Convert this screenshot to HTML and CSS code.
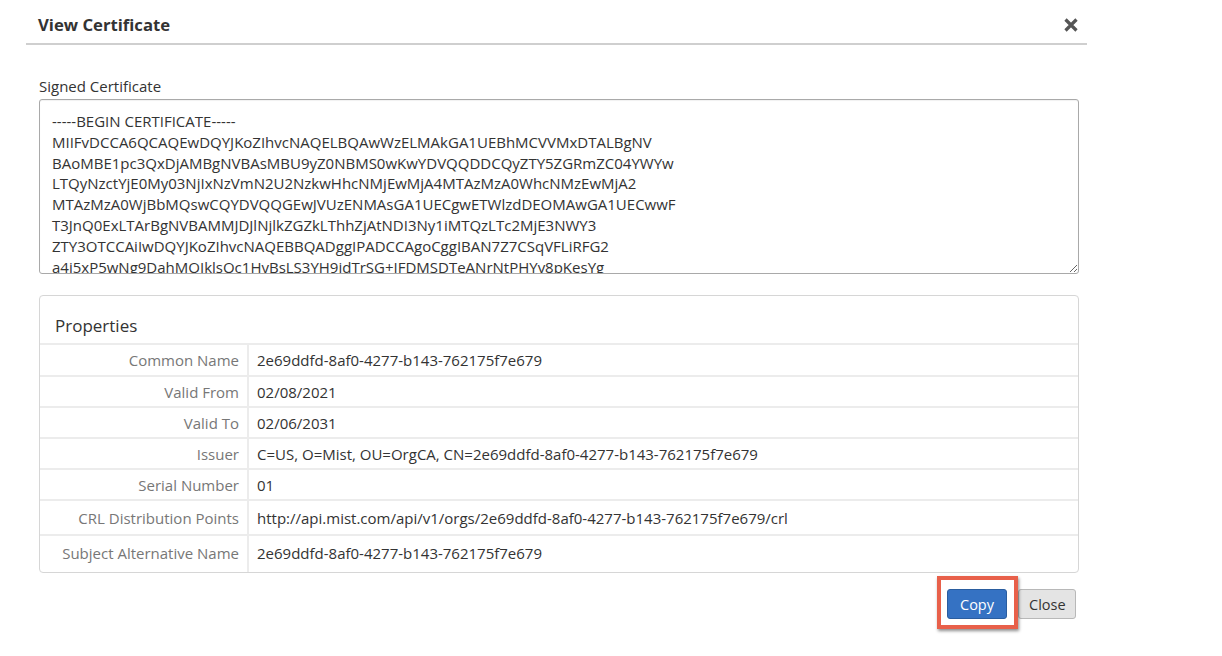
FILE: index.html
```html
<!DOCTYPE html>
<html>
<head>
<meta charset="utf-8">
<link rel="stylesheet" href="styles.css">
</head>
<body>
<div class="modal">
  <div class="modal-header">
    <h1 class="modal-title">View Certificate</h1>
    <button class="close-btn" aria-label="Close">
      <svg width="16" height="16" viewBox="0 0 16 16"><path d="M2.5 2.5 L13.5 13.5 M13.5 2.5 L2.5 13.5" stroke="#555" stroke-width="3.2" stroke-linecap="butt"/></svg>
    </button>
  </div>
  <div class="modal-body">
    <label class="field-label">Signed Certificate</label>
    <textarea class="cert-text" readonly>-----BEGIN CERTIFICATE-----
MIIFvDCCA6QCAQEwDQYJKoZIhvcNAQELBQAwWzELMAkGA1UEBhMCVVMxDTALBgNV
BAoMBE1pc3QxDjAMBgNVBAsMBU9yZ0NBMS0wKwYDVQQDDCQyZTY5ZGRmZC04YWYw
LTQyNzctYjE0My03NjIxNzVmN2U2NzkwHhcNMjEwMjA4MTAzMzA0WhcNMzEwMjA2
MTAzMzA0WjBbMQswCQYDVQQGEwJVUzENMAsGA1UECgwETWlzdDEOMAwGA1UECwwF
T3JnQ0ExLTArBgNVBAMMJDJlNjlkZGZkLThhZjAtNDI3Ny1iMTQzLTc2MjE3NWY3
ZTY3OTCCAiIwDQYJKoZIhvcNAQEBBQADggIPADCCAgoCggIBAN7Z7CSqVFLiRFG2
a4i5xP5wNg9DahMQIklsOc1HyBsLS3YH9idTrSG+IFDMSDTeANrNtPHYv8pKesYg
-----END CERTIFICATE-----</textarea>

    <div class="panel">
      <div class="panel-heading">Properties</div>
      <table class="props">
        <tr><th>Common Name</th><td>2e69ddfd-8af0-4277-b143-762175f7e679</td></tr>
        <tr><th>Valid From</th><td>02/08/2021</td></tr>
        <tr><th>Valid To</th><td>02/06/2031</td></tr>
        <tr><th>Issuer</th><td>C=US, O=Mist, OU=OrgCA, CN=2e69ddfd-8af0-4277-b143-762175f7e679</td></tr>
        <tr><th>Serial Number</th><td>01</td></tr>
        <tr class="tall"><th>CRL Distribution Points</th><td>http://api.mist.com/api/v1/orgs/2e69ddfd-8af0-4277-b143-762175f7e679/crl</td></tr>
        <tr class="tall last"><th>Subject Alternative Name</th><td>2e69ddfd-8af0-4277-b143-762175f7e679</td></tr>
      </table>
    </div>

    <div class="modal-footer">
      <div class="highlight-wrap">
        <button class="btn btn-primary">Copy</button>
        <span class="highlight"></span>
      </div>
      <button class="btn btn-default">Close</button>
    </div>
  </div>
</div>
</body>
</html>
```

FILE: styles.css
```css
* { box-sizing: border-box; }

body {
  margin: 0;
  background: #fff;
  font-family: "Open Sans", "Noto Sans", sans-serif;
  color: #333;
}

.modal {
  margin-left: 26px;
  width: 1061px;
  padding-bottom: 30px;
}

.modal-header {
  height: 45px;
  display: flex;
  align-items: center;
  justify-content: space-between;
  padding: 6px 8px 0 12px;
  border-bottom: 2px solid #cfcfcf;
}

.modal-title {
  margin: 0;
  font-size: 16.7px;
  font-weight: 700;
  color: #333;
}

.close-btn {
  border: 0;
  background: none;
  padding: 0;
  width: 17px;
  height: 17px;
  display: flex;
  align-items: center;
  justify-content: center;
}

.modal-body {
  padding: 31px 8px 0 13px;
}

.field-label {
  display: block;
  font-size: 15px;
  line-height: 20px;
  color: #333;
  margin-bottom: 3px;
}

.cert-text {
  display: block;
  width: 100%;
  height: 175px;
  margin: 0;
  padding: 11px 12px;
  border: 1px solid #a9a9a9;
  border-radius: 3px;
  font-family: "Open Sans", "Noto Sans", sans-serif;
  font-size: 15px;
  line-height: 20.8px;
  color: #333;
  overflow: hidden;
  resize: vertical;
  white-space: pre;
  box-shadow: inset 0 1px 1px rgba(0,0,0,0.06);
}

.panel {
  margin-top: 21px;
  border: 1px solid #d6d6d6;
  border-radius: 4px;
  overflow: hidden;
}

.panel-heading {
  height: 49px;
  padding: 19px 15px 0;
  font-size: 17px;
  line-height: 22px;
  color: #333;
  border-bottom: 2px solid #ececec;
}

.props {
  width: 100%;
  border-collapse: collapse;
  font-size: 15px;
}

.props th,
.props td {
  height: 31.1px;
  padding: 0 8px;
  line-height: 20px;
  border-bottom: 2px solid #ececec;
}

.props .tall th,
.props .tall td {
  height: 35px;
}

.props .last th,
.props .last td {
  height: 37px;
  padding-bottom: 3px;
  border-bottom: 0;
}

.props th {
  width: 208px;
  text-align: right;
  font-weight: 400;
  color: #777;
  border-right: 2px solid #ececec;
}

.props td {
  color: #333;
}

.modal-footer {
  display: flex;
  justify-content: flex-end;
  align-items: center;
  gap: 11px;
  margin-top: 16px;
  padding-right: 3px;
}

.highlight-wrap {
  position: relative;
  display: flex;
}

.highlight {
  position: absolute;
  top: -13px;
  left: -10px;
  right: -11px;
  bottom: -10px;
  border: 4px solid #e8604a;
  box-shadow: 1px 2px 3px rgba(0,0,0,0.45);
  pointer-events: none;
}

.btn {
  height: 30px;
  padding: 0 10px;
  font-family: "Open Sans", "Noto Sans", sans-serif;
  font-size: 14.5px;
  border-radius: 3px;
  cursor: pointer;
}

.btn-primary {
  width: 60px;
  background: #3572c3;
  border: 1px solid #2a5d9f;
  color: #fff;
}

.btn-default {
  width: 58px;
  background: #e4e4e4;
  border: 1px solid #b8b8b8;
  color: #333;
}
```
